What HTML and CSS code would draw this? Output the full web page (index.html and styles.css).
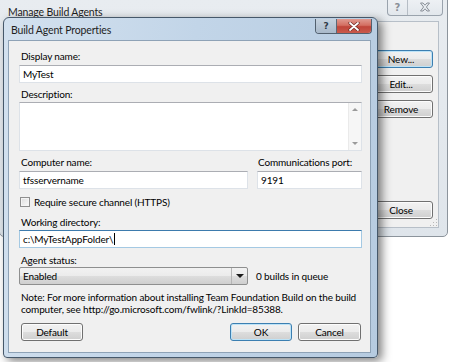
FILE: index.html
```html
<!DOCTYPE html>
<html lang="en">
<head>
    <meta charset="UTF-8">
    <meta name="viewport" content="width=device-width, initial-scale=1.0">
    <title>Manage Build Agents</title>
    <link rel="stylesheet" href="styles.css">
</head>
<body>

    <div class="desk">

        <!-- Parent window (inactive) -->
        <div class="window outer">
            <div class="titlebar">
                <span class="title">Manage Build Agents</span>
            </div>
            <div class="caption-btns">
                <span class="cb help">?</span>
                <span class="cb close">
                    <svg width="12" height="10" viewBox="0 0 12 10">
                        <path d="M1.5 1 L4 1 L6 3.2 L8 1 L10.5 1 L7.4 5 L10.5 9 L8 9 L6 6.8 L4 9 L1.5 9 L4.6 5 Z" fill="none" stroke="#8a9098" stroke-width="1"/>
                    </svg>
                </span>
            </div>
            <div class="client side-client">
                <div class="side-buttons">
                    <button class="btn is-default">New...</button>
                    <button class="btn">Edit...</button>
                    <button class="btn">Remove</button>
                    <button class="btn close-btn">Close</button>
                </div>
                <span class="grip"></span>
            </div>
        </div>

        <!-- Build Agent Properties dialog (active) -->
        <div class="window dialog">
            <div class="titlebar">
                <span class="title">Build Agent Properties</span>
            </div>
            <div class="caption-btns">
                <span class="cb help">?</span>
                <span class="cb close">
                    <svg width="12" height="9" viewBox="0 0 12 9">
                        <path d="M2 1 L10 8 M10 1 L2 8" stroke="#6b2a24" stroke-width="3.2" stroke-linecap="round"/>
                        <path d="M2 1 L10 8 M10 1 L2 8" stroke="#fff" stroke-width="1.8" stroke-linecap="round"/>
                    </svg>
                </span>
            </div>
            <div class="client form">
                <label class="lbl first">Display name:</label>
                <div class="textbox">MyTest</div>

                <label class="lbl">Description:</label>
                <div class="textarea">
                    <div class="scrollbar">
                        <span class="arrow up"></span>
                        <span class="arrow down"></span>
                    </div>
                </div>

                <div class="row two-col">
                    <div class="col left">
                        <label class="lbl">Computer name:</label>
                        <div class="textbox">tfsservername</div>
                    </div>
                    <div class="col right">
                        <label class="lbl">Communications port:</label>
                        <div class="textbox">9191</div>
                    </div>
                </div>

                <div class="check-row">
                    <span class="checkbox"></span>
                    <span>Require secure channel (HTTPS)</span>
                </div>

                <label class="lbl work-lbl">Working directory:</label>
                <div class="textbox focused">c:\MyTestAppFolder\<span class="caret"></span></div>

                <label class="lbl status-lbl">Agent status:</label>
                <div class="row status-row">
                    <div class="combo">
                        <span class="combo-text">Enabled</span>
                        <span class="combo-arrow"></span>
                    </div>
                    <span class="queue">0 builds in queue</span>
                </div>

                <p class="note">Note: For more information about installing Team Foundation Build on the build<br>computer, see http://go.microsoft.com/fwlink/?LinkId=85388.</p>

                <div class="row buttons">
                    <button class="btn">Default</button>
                    <div class="btn-group">
                        <button class="btn is-default">OK</button>
                        <button class="btn cancel">Cancel</button>
                    </div>
                </div>
            </div>
        </div>

    </div>

</body>
</html>
```

FILE: styles.css
```css
* {
    box-sizing: border-box;
}
body {
    margin: 0;
    background-color: #fff;
    font-family: Lato, "Open Sans", sans-serif;
    font-size: 10px;
    letter-spacing: -0.15px;
    color: #000;
}
.desk {
    position: relative;
    width: 450px;
    height: 362px;
    overflow: hidden;
}

/* Windows */
.window {
    position: absolute;
    display: flex;
    flex-direction: column;
}
.titlebar {
    display: flex;
    align-items: center;
    flex-shrink: 0;
}
.title {
    font-size: 10.5px;
    color: #1e1e1e;
}
.client {
    flex: 1;
    background-color: #f0f0f0;
}

.outer {
    left: -1px;
    top: -2px;
    width: 449px;
    height: 239px;
    border: 1px solid #8c949c;
    border-radius: 0 0 5px 5px;
    background: linear-gradient(#e8ecf0, #dfe5eb);
    padding: 0 8px 8px 8px;
}
.outer .titlebar {
    height: 22px;
    padding-top: 3px;
}
.side-client {
    border: 1px solid #b7bfc8;
    display: flex;
    justify-content: flex-end;
    position: relative;
    padding: 28px 5px 8px 0;
}
.side-buttons {
    width: 64px;
    display: flex;
    flex-direction: column;
    gap: 7px;
}
.side-buttons .close-btn {
    margin-top: auto;
}
.grip {
    position: absolute;
    right: 1px;
    bottom: 1px;
    width: 8px;
    height: 8px;
    background-image: radial-gradient(circle, #b8b8b8 0.8px, transparent 1px);
    background-size: 3px 3px;
    clip-path: polygon(100% 0, 100% 100%, 0 100%);
}

.dialog {
    left: 3px;
    top: 17px;
    width: 375px;
    height: 341px;
    border: 1px solid #46586a;
    border-radius: 6px 6px 4px 4px;
    background: linear-gradient(100deg, #d3e1ef 0%, #c2d5e8 45%, #b6cbe0 100%);
    padding: 0 6px 4px 4px;
    box-shadow: 4px 3px 10px rgba(0, 0, 0, 0.5);
}
.dialog .titlebar {
    height: 22px;
    padding-left: 3px;
    padding-top: 2px;
}
.dialog .client {
    border: 1px solid #8ea2b6;
}

/* Caption buttons */
.caption-btns {
    position: absolute;
    display: flex;
    border: 1px solid #9aa3ad;
    border-top: none;
    border-radius: 0 0 4px 4px;
    overflow: hidden;
}
.cb {
    display: flex;
    align-items: center;
    justify-content: center;
    font-family: "DejaVu Sans", sans-serif;
    font-weight: bold;
    letter-spacing: 0;
}
.outer .caption-btns {
    right: 4px;
    top: 0;
    height: 17px;
    background: linear-gradient(#eef1f4, #e2e7ec);
}
.outer .cb {
    color: #8a9098;
    font-size: 10px;
}
.outer .help {
    width: 20px;
    border-right: 1px solid #b6bdc5;
}
.outer .close {
    width: 34px;
}
.dialog .caption-btns {
    right: 5px;
    top: 1px;
    height: 15px;
    border-color: #52606e;
}
.dialog .help {
    width: 21px;
    background: linear-gradient(#c5d2df, #a9b9ca);
    color: #2e3a46;
    font-size: 9px;
    border-right: 1px solid #5a6877;
}
.dialog .close {
    width: 34px;
    background: linear-gradient(#e09a90 0%, #d46f62 45%, #c0453a 55%, #c95a4c 100%);
}

/* Buttons */
.btn {
    height: 18px;
    padding: 0;
    font-family: inherit;
    font-size: 10px;
    letter-spacing: inherit;
    color: #000;
    border: 1px solid #707070;
    border-radius: 3px;
    background: linear-gradient(#f2f2f2 0%, #ebebeb 50%, #dddddd 51%, #cfcfcf 100%);
    box-shadow: inset 0 0 0 1px #fcfcfc;
}
.btn.is-default {
    border-color: #3c7fb1;
    box-shadow: inset 0 0 0 1px #bde3f7;
}

/* Form */
.form {
    display: flex;
    flex-direction: column;
    padding: 9px 8px 0 10px;
}
.lbl {
    display: block;
    height: 13px;
    line-height: 13px;
    margin-left: 2px;
    margin-top: 5px;
    margin-bottom: 2px;
}
.lbl.first {
    margin-top: 0;
}
.textbox {
    height: 18px;
    line-height: 16px;
    padding-left: 3px;
    background-color: #fff;
    border: 1px solid #dde2e8;
    border-top-color: #abadb3;
    white-space: nowrap;
}
.textbox.focused {
    border-color: #a4c9e3;
    border-top-color: #3d7bad;
}
.caret {
    display: inline-block;
    width: 1px;
    height: 12px;
    margin-left: 1px;
    vertical-align: -2px;
    background-color: #000;
}
.textarea {
    height: 49px;
    margin-top: -1px;
    background-color: #fff;
    border: 1px solid #dde2e8;
    border-top-color: #abadb3;
    display: flex;
    justify-content: flex-end;
}
.scrollbar {
    width: 13px;
    border-left: 1px solid #eaeaea;
    background-color: #f6f6f6;
    display: flex;
    flex-direction: column;
    justify-content: space-between;
    align-items: center;
    padding: 5px 0;
}
.arrow {
    width: 0;
    height: 0;
    border-left: 3px solid transparent;
    border-right: 3px solid transparent;
}
.arrow.up {
    border-bottom: 3px solid #9a9a9a;
}
.arrow.down {
    border-top: 3px solid #9a9a9a;
}

.row {
    display: flex;
}
.two-col {
    gap: 9px;
}
.col {
    display: flex;
    flex-direction: column;
}
.col.left {
    width: 229px;
}
.col.right {
    flex: 1;
}
.col.right .lbl {
    margin-left: 1px;
}

.check-row {
    display: flex;
    align-items: center;
    gap: 4px;
    height: 13px;
    margin-top: 6px;
    margin-left: 1px;
}
.checkbox {
    width: 10px;
    height: 10px;
    border: 1px solid #8f8f8f;
    background: linear-gradient(135deg, #dcdcdc, #fbfbfb);
    box-shadow: inset 0 0 0 1px #f4f4f4;
}
.work-lbl {
    margin-top: 8px;
    margin-bottom: 1px;
}
.status-lbl {
    margin-top: 6px;
    margin-bottom: 0;
}

.status-row {
    align-items: center;
    gap: 8px;
}
.combo {
    width: 229px;
    height: 18px;
    display: flex;
    align-items: center;
    justify-content: space-between;
    border: 1px solid #8e8f8f;
    border-radius: 2px;
    background: linear-gradient(#f2f2f2 0%, #ebebeb 50%, #dddddd 51%, #cfcfcf 100%);
}
.combo-text {
    padding-left: 3px;
}
.combo-arrow {
    width: 16px;
    height: 100%;
    border-left: 1px solid #b5b5b5;
    display: flex;
    align-items: center;
    justify-content: center;
}
.combo-arrow::after {
    content: "";
    border-left: 4px solid transparent;
    border-right: 4px solid transparent;
    border-top: 4px solid #1b1b1b;
}

.note {
    margin: 6px 0 0 2px;
    line-height: 12px;
    white-space: nowrap;
}

.buttons {
    justify-content: space-between;
    margin-top: 8px;
}
.buttons > .btn {
    width: 62px;
    margin-left: 2px;
}
.btn-group {
    display: flex;
    gap: 6px;
    margin-right: 1px;
}
.btn-group .btn {
    width: 62px;
}
.btn-group .cancel {
    width: 63px;
}
```
